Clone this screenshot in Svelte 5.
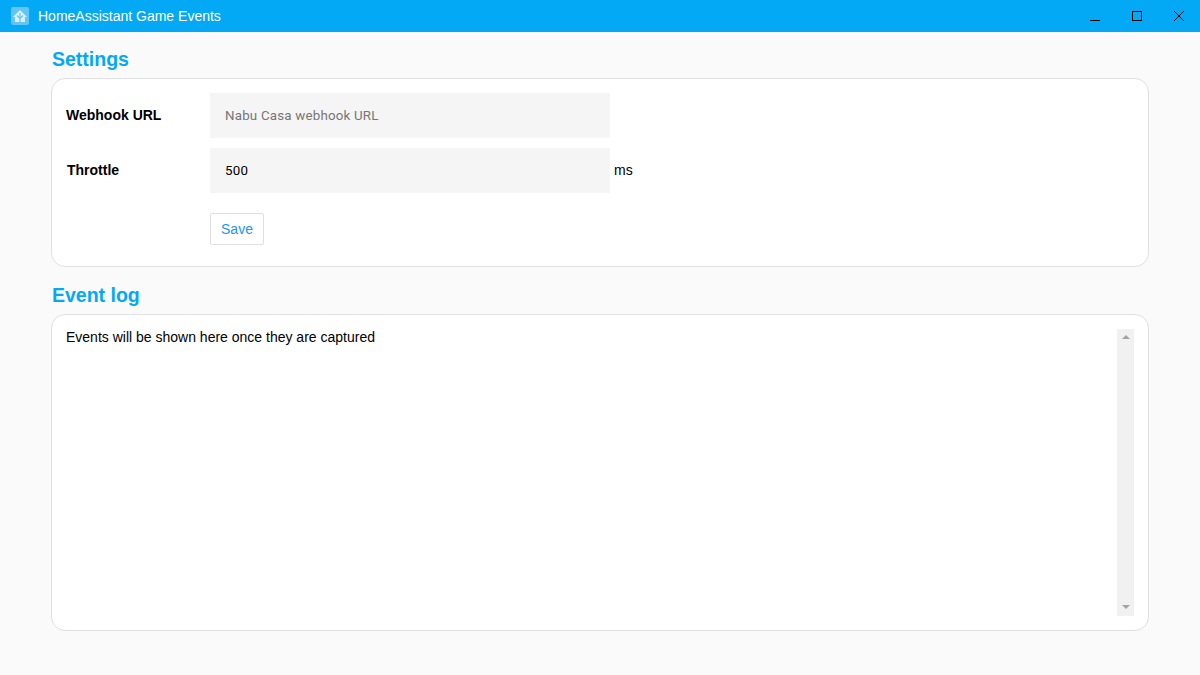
<script>
  const title = 'HomeAssistant Game Events';
</script>

<div class="window">
  <header class="titlebar">
    <div class="brand">
      <svg class="logo" width="18" height="18" viewBox="0 0 18 18" aria-hidden="true">
        <rect width="18" height="18" rx="2" fill="#62c5f6" />
        <path d="M9 3 L16 10 H14 V15 H4 V10 H2 Z" fill="#d9f1fd" />
        <path d="M9 6 V15 M6 8.500 L9 11.500 L12 8.500" stroke="#62c5f6" stroke-width="1.200" fill="none" />
      </svg>
      <span class="title">{title}</span>
    </div>
    <div class="controls">
      <svg width="42" height="32" viewBox="0 0 42 32" aria-hidden="true"><path d="M16 20.500 H26" stroke="#000" fill="none" /></svg>
      <svg width="42" height="32" viewBox="0 0 42 32" aria-hidden="true"><rect x="16.500" y="11.500" width="9" height="9" stroke="#000" fill="none" /></svg>
      <svg width="42" height="32" viewBox="0 0 42 32" aria-hidden="true"><path d="M16 11 L26 21 M26 11 L16 21" stroke="#000" fill="none" /></svg>
    </div>
  </header>

  <main class="content">
    <h2>Settings</h2>
    <section class="card settings">
      <div class="row">
        <label class="label" for="url">Webhook URL</label>
        <input id="url" class="field" type="text" placeholder="Nabu Casa webhook URL" />
      </div>
      <div class="row">
        <label class="label throttle" for="throttle">Throttle</label>
        <input id="throttle" class="field" type="text" value="500" />
        <span class="unit">ms</span>
      </div>
      <div class="row actions">
        <button type="button" class="save">Save</button>
      </div>
    </section>

    <h2 class="second">Event log</h2>
    <section class="card log">
      <div class="log-text">Events will be shown here once they are captured</div>
      <div class="scrollbar">
        <span class="arrow up"></span>
        <span class="arrow down"></span>
      </div>
    </section>
  </main>
</div>

<style>
  :global(body) {
    margin: 0;
    background: #fafafa;
    font-family: "Liberation Sans", Arial, sans-serif;
    color: #000;
  }

  .window {
    height: 675px;
    display: flex;
    flex-direction: column;
    overflow: hidden;
  }

  .titlebar {
    height: 32px;
    flex: none;
    background: #03a9f4;
    display: flex;
    align-items: center;
    justify-content: space-between;
  }

  .brand {
    display: flex;
    align-items: center;
    padding-left: 11px;
  }

  .logo {
    display: block;
  }

  .title {
    margin-left: 9px;
    font-size: 14px;
    color: #fff;
  }

  .controls {
    display: flex;
    height: 32px;
  }

  .controls svg {
    display: block;
  }

  .content {
    padding: 0 51px;
  }

  h2 {
    margin: 0;
    padding: 9px 0 0 1px;
    height: 46px;
    display: flex;
    align-items: center;
    font-size: 19.500px;
    font-weight: 700;
    color: #03a9f4;
    line-height: 23px;
    box-sizing: border-box;
  }

  .second {
    height: 47px;
  }

  .card {
    background: #fff;
    border: 1px solid #e0e0e0;
    border-radius: 14px;
    box-sizing: border-box;
    padding: 14px;
  }

  .settings {
    height: 189px;
    display: flex;
    flex-direction: column;
    gap: 10px;
  }

  .row {
    display: flex;
    align-items: center;
    height: 45px;
  }

  .label {
    width: 144px;
    flex: none;
    font-size: 14px;
    font-weight: 700;
    padding-bottom: 2px;
  }

  .throttle {
    padding-left: 1px;
    box-sizing: border-box;
  }

  .field {
    width: 400px;
    height: 45px;
    box-sizing: border-box;
    border: 0;
    outline: 0;
    border-radius: 0;
    background: #f5f5f5;
    padding: 0 15px;
    font-family: Roboto, sans-serif;
    font-size: 13.330px;
    letter-spacing: 0.200px;
    color: #000;
  }

  .field::placeholder {
    color: #757575;
    opacity: 1;
  }

  .unit {
    margin-left: 4px;
    font-size: 14px;
    padding-bottom: 1px;
  }

  .actions {
    height: 32px;
    margin-top: 10px;
    padding-left: 144px;
  }

  .save {
    width: 54px;
    height: 32px;
    box-sizing: border-box;
    background: #fff;
    border: 1px solid #e0e0e0;
    border-radius: 2px;
    padding: 0;
    font-family: "Liberation Sans", Arial, sans-serif;
    font-size: 14px;
    color: #2196f3;
  }

  .log {
    height: 317px;
    display: flex;
    justify-content: space-between;
  }

  .log-text {
    font-size: 14px;
    line-height: 16px;
  }

  .scrollbar {
    width: 17px;
    background: #f1f1f1;
    display: flex;
    flex-direction: column;
    justify-content: space-between;
    align-items: center;
    padding: 6px 0 7px;
    box-sizing: border-box;
  }

  .arrow {
    width: 0;
    height: 0;
    border-left: 4px solid transparent;
    border-right: 4px solid transparent;
  }

  .up {
    border-bottom: 4px solid #a3a3a3;
  }

  .down {
    border-top: 4px solid #a3a3a3;
  }
</style>
